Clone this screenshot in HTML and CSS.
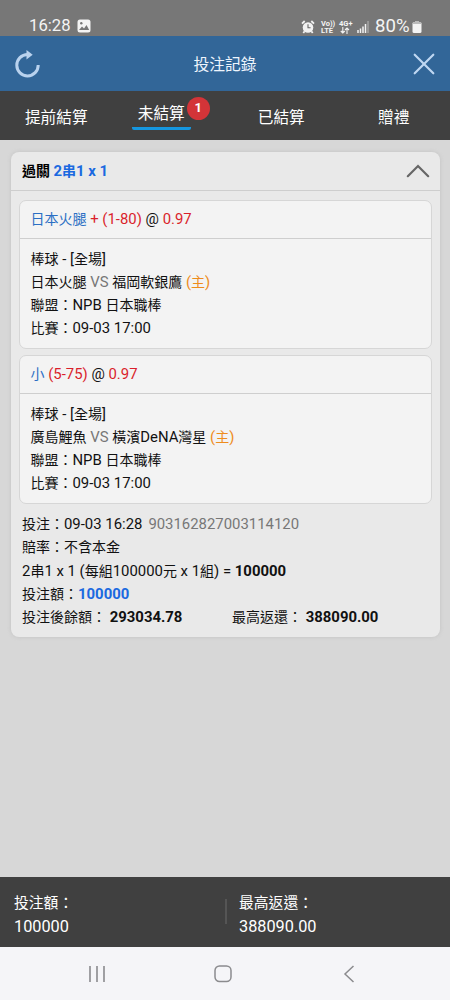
FILE: index.html
```html
<!DOCTYPE html>
<html lang="zh-Hant">
<head>
<meta charset="utf-8">
<title>投注記錄</title>
<link rel="stylesheet" href="styles.css">
</head>
<body>
<div class="app">
  <div class="status">
    <span class="clock">16:28</span>
    <svg class="photo" width="14" height="14" viewBox="0 0 14 14"><rect x=".5" y=".5" width="13" height="13" rx="2.5" fill="#f4f4f4"/><path d="M2 11 5 7.4l2 2L9.5 6l2.7 5z" fill="#777"/><circle cx="4.3" cy="4.3" r="1.2" fill="#777"/></svg>
    <div class="signals">
      <svg width="14" height="14" viewBox="0 0 14 14"><circle cx="7" cy="7.5" r="5.3" fill="#f2f2f2"/><path d="M1 3.7 3.7 1M10.3 1 13 3.7M3.6 11.3 2.3 13M10.4 11.3l1.3 1.7" stroke="#f2f2f2" stroke-width="1.8"/><path d="M7 4.3v3.5h2.6" fill="none" stroke="#666" stroke-width="1.1"/></svg>
      <div class="volte"><span>Vo))</span><span>LTE</span></div>
      <div class="net"><span>4G+</span><svg width="10" height="7" viewBox="0 0 10 7"><path d="M2.8 0v6M.8 4l2 2 2-2M7 7V1M5 3l2-2 2 2" fill="none" stroke="#f2f2f2" stroke-width="1.1"/></svg></div>
      <svg class="bars" width="12" height="12" viewBox="0 0 12 12"><path d="M1 9v3M3.5 7.5V12M6 5.500V12M8.500 3v9" stroke="#f2f2f2" stroke-width="1.5"/><path d="M11 0v12" stroke="#aaa" stroke-width="1.3"/></svg>
      <span class="percent">80%</span>
      <svg class="battery" width="10" height="12" viewBox="0 0 10 12"><path d="M3 0h4v1.2H3z" fill="#bbb"/><rect x=".5" y="1" width="9" height="11" rx="1.5" fill="#f4f4f4"/><path d="M1 1h8v2H1z" fill="#bbb"/></svg>
    </div>
  </div>

  <header class="topbar">
    <svg class="icon" width="28" height="30" viewBox="0 0 28 30"><path d="M14.500 5.500A10.700 10.700 0 1 0 25.200 16" fill="none" stroke="#b9d2ee" stroke-width="3"/><path d="M13.500 1v9.500l6.200-4.800z" fill="#b9d2ee"/></svg>
    <h1>投注記錄</h1>
    <svg class="icon" width="22" height="22" viewBox="0 0 22 22"><path d="M1.700 1.700l18.600 18.600M20.300 1.700 1.700 20.300" fill="none" stroke="#bfd7f2" stroke-width="2.200" stroke-linecap="round"/></svg>
  </header>

  <nav class="tabs">
    <div class="tab">提前結算</div>
    <div class="tab active"><span class="label">未結算<b class="badge">1</b></span></div>
    <div class="tab">已結算</div>
    <div class="tab">贈禮</div>
  </nav>

  <main>
    <section class="ticket">
      <div class="ticket-head">
        <b>過關 <span class="blue"><i>2</i>串<i>1 x 1</i></span></b>
        <svg class="chevron" width="24" height="14" viewBox="0 0 24 14"><path d="M1.800 12.200 12 2l10.200 10.200" fill="none" stroke="#666" stroke-width="2.200" stroke-linecap="round"/></svg>
      </div>
      <div class="ticket-body">
        <article class="leg">
          <div class="pick"><span class="team">日本火腿</span><i> <span class="red">+ (1-80)</span> @ <span class="red">0.97</span></i></div>
          <div class="detail">
            <p>棒球<i> - [</i>全場<i>]</i></p>
            <p>日本火腿<i class="gray"> VS </i>福岡軟銀鷹<i> </i><span class="orange"><i>(</i>主<i>)</i></span></p>
            <p>聯盟：<i>NPB </i>日本職棒</p>
            <p>比賽：<i>09-03 17:00</i></p>
          </div>
        </article>
        <article class="leg">
          <div class="pick"><span class="team">小</span><i> <span class="red">(5-75)</span> @ <span class="red">0.97</span></i></div>
          <div class="detail">
            <p>棒球<i> - [</i>全場<i>]</i></p>
            <p>廣島鯉魚<i class="gray"> VS </i>橫濱<i>DeNA</i>灣星<i> </i><span class="orange"><i>(</i>主<i>)</i></span></p>
            <p>聯盟：<i>NPB </i>日本職棒</p>
            <p>比賽：<i>09-03 17:00</i></p>
          </div>
        </article>
        <div class="summary">
          <p>投注：<i>09-03 16:28</i><i class="gray serial">903162827003114120</i></p>
          <p>賠率：不含本金</p>
          <p><i>2</i>串<i>1 x 1 (</i>每組<i>100000</i>元<i> x 1</i>組<i>) = <b>100000</b></i></p>
          <p>投注額：<i><b class="blue">100000</b></i></p>
          <div class="pair">
            <p>投注後餘額：<i> <b>293034.78</b></i></p>
            <p>最高返還：<i> <b>388090.00</b></i></p>
          </div>
        </div>
      </div>
    </section>
  </main>

  <footer class="totals">
    <div><span>投注額：</span><span class="amount">100000</span></div>
    <div><span>最高返還：</span><span class="amount">388090.00</span></div>
  </footer>

  <div class="sysnav">
    <svg width="18" height="18" viewBox="0 0 18 18"><path d="M2 1v16M9 1v16M16 1v16" stroke="#8b8b8e" stroke-width="1.6"/></svg>
    <svg width="18" height="18" viewBox="0 0 18 18"><rect x="1" y="1" width="16" height="15.6" rx="4.5" fill="none" stroke="#8b8b8e" stroke-width="1.5"/></svg>
    <svg width="12" height="18" viewBox="0 0 12 18"><path d="M10.500 1 2 9l8.500 8" fill="none" stroke="#8b8b8e" stroke-width="1.5"/></svg>
  </div>
</div>
</body>
</html>
```

FILE: styles.css
```css
* { box-sizing: border-box; }
body {
  margin: 0;
  font-family: Roboto, "Noto Sans CJK TC", sans-serif;
  font-size: 14px;
  color: #111;
}
p, h1 { margin: 0; }
/* Latin runs are set slightly larger than the Chinese text around them */
i { font-style: normal; font-size: 14.9px; }
.app {
  width: 450px;
  height: 1000px;
  display: flex;
  flex-direction: column;
  background: #d7d7d7;
  overflow: hidden;
}

.status {
  height: 36px;
  flex: none;
  display: flex;
  align-items: flex-end;
  padding: 0 28px 2px 29px;
  background: #777;
  color: #f4f4f4;
}
.clock { font-size: 16.7px; line-height: 16px; width: 48px; }
.photo { margin-bottom: 1px; }
.signals { margin-left: auto; display: flex; align-items: flex-end; }
.volte, .net {
  display: flex;
  flex-direction: column;
  font-size: 7.5px;
  line-height: 7px;
  font-weight: 700;
}
.volte { margin-left: 6px; width: 15px; }
.net { margin-left: 3px; width: 14px; }
.net svg { margin-left: 1px; }
.bars { margin: 0 0 1px 4px; }
.percent { margin-left: 6px; width: 36px; font-size: 18.6px; line-height: 16px; }
.battery { margin: 0 0 1px 1px; }

.topbar {
  height: 55px;
  flex: none;
  display: grid;
  grid-template-columns: 40px 1fr 40px;
  align-items: center;
  padding: 0 15px 0 13px;
  background: #326698;
  color: #eef5fd;
}
.topbar h1 {
  padding: 2px 0 0 2px;
  font-size: 15.8px;
  font-weight: 400;
  text-align: center;
  line-height: 24px;
}
.topbar .icon:last-child { justify-self: end; }

.tabs {
  height: 49px;
  flex: none;
  display: grid;
  grid-template-columns: repeat(4, 1fr);
  background: #404040;
  color: #fff;
  font-size: 15.7px;
  line-height: 24px;
}
.tab { display: flex; justify-content: center; padding-top: 15px; }
.active { padding: 11px 15px 0 0; }
.label {
  position: relative;
  height: 28px;
  padding: 0 6px;
  border-bottom: 3px solid #1697e0;
  border-radius: 2px;
}
.badge {
  position: absolute;
  left: 55px;
  top: -5px;
  width: 23px;
  height: 23px;
  border-radius: 50%;
  background: #d33438;
  font-size: 13px;
  line-height: 22px;
  text-align: center;
}

main { flex: 1; padding: 12px 10px 0 11px; }
.ticket {
  height: 485px;
  border-radius: 8px;
  background: #e9e9e9;
  box-shadow: 0 0 4px #c2c2c2;
}
.ticket-head {
  height: 39px;
  display: flex;
  justify-content: space-between;
  align-items: center;
  padding: 0 10px 2px 11px;
  border-bottom: 1px solid #cecece;
  color: #000;
}
.chevron { margin-top: 2px; }
.ticket-body { padding: 9px 8px 0; display: flex; flex-direction: column; gap: 6px; }
.leg {
  height: 149px;
  border: 1px solid #d6d6d6;
  border-radius: 7px;
  background: #f3f3f3;
}
.pick {
  height: 38px;
  padding-left: 10.5px;
  line-height: 36px;
  border-bottom: 1px solid #cecece;
}
.detail { padding: 8.6px 0 0 10.5px; }
.detail p, .summary p { height: 23.3px; line-height: 23.3px; white-space: pre; }
.summary { padding: 3px 3px; }
.serial { margin-left: 6px; }
.pair { display: grid; grid-template-columns: 210px 1fr; }

.blue { color: #1b69e0; }
.team { color: #2b6fc4; }
.red { color: #da1f2b; }
.gray { color: #777; }
.orange { color: #ee8c1c; }

.totals {
  height: 70px;
  flex: none;
  display: grid;
  grid-template-columns: 1fr 1fr;
  align-items: center;
  background: #404040;
  color: #fff;
  font-size: 14.8px;
  line-height: 23px;
}
.totals div { display: flex; flex-direction: column; padding: 5px 0 0 14px; }
.totals div + div {
  background: linear-gradient(#555, #555) 0 12px / 2px 25px no-repeat;
}
.amount { font-size: 16.3px; }

.sysnav {
  height: 53px;
  flex: none;
  display: grid;
  grid-template-columns: 159px 127px 1fr;
  align-items: center;
  background: #f5f5f8;
}
.sysnav svg { justify-self: center; }
.sysnav svg:first-child { justify-self: start; margin-left: 88px; }
.sysnav svg:last-child { justify-self: start; margin-left: 57px; }
```
